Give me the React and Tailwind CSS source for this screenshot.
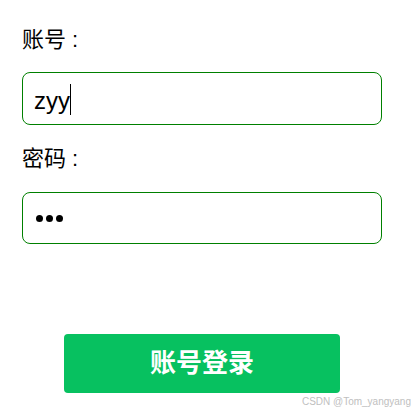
export default function App() {
    return (
        <div className="bg-white min-h-[415px] w-[411px] relative font-['Liberation_Sans','Noto_Sans_CJK_SC',sans-serif] text-black">
            <div className="pt-[26px] ml-[22px] w-[360px]">
                {/* 账号 */}
                <div className="text-[22px] leading-[28px]">账号<span className="ml-[6px]">:</span></div>
                <div className="mt-[18px] h-[53px] border border-[#008000] rounded-[8px] flex items-center pl-[11px]">
                    <span className="text-[24px] leading-none pt-[4px]">zyy</span>
                    <span className="w-px h-[31px] bg-black mt-[2px]"></span>
                </div>

                {/* 密码 */}
                <div className="mt-[20px] text-[22px] leading-[28px]">密码<span className="ml-[6px]">:</span></div>
                <div className="mt-[19px] h-[52px] border border-[#008000] rounded-[8px] flex items-center gap-[3px] pl-[13px]">
                    <span className="w-[7px] h-[7px] rounded-full bg-black"></span>
                    <span className="w-[7px] h-[7px] rounded-full bg-black"></span>
                    <span className="w-[7px] h-[7px] rounded-full bg-black"></span>
                </div>

                <div className="mt-[90px] flex justify-center">
                    <button className="w-[276px] h-[59px] bg-[#07c160] rounded-[4px] text-white text-[26px] font-bold">
                        账号登录
                    </button>
                </div>
            </div>
            <div className="absolute right-0 top-[396px] text-[10px] leading-[12px] text-[#c0c0c0] font-['Liberation_Sans',sans-serif]">
                CSDN @Tom_yangyang
            </div>
        </div>
    )
}
